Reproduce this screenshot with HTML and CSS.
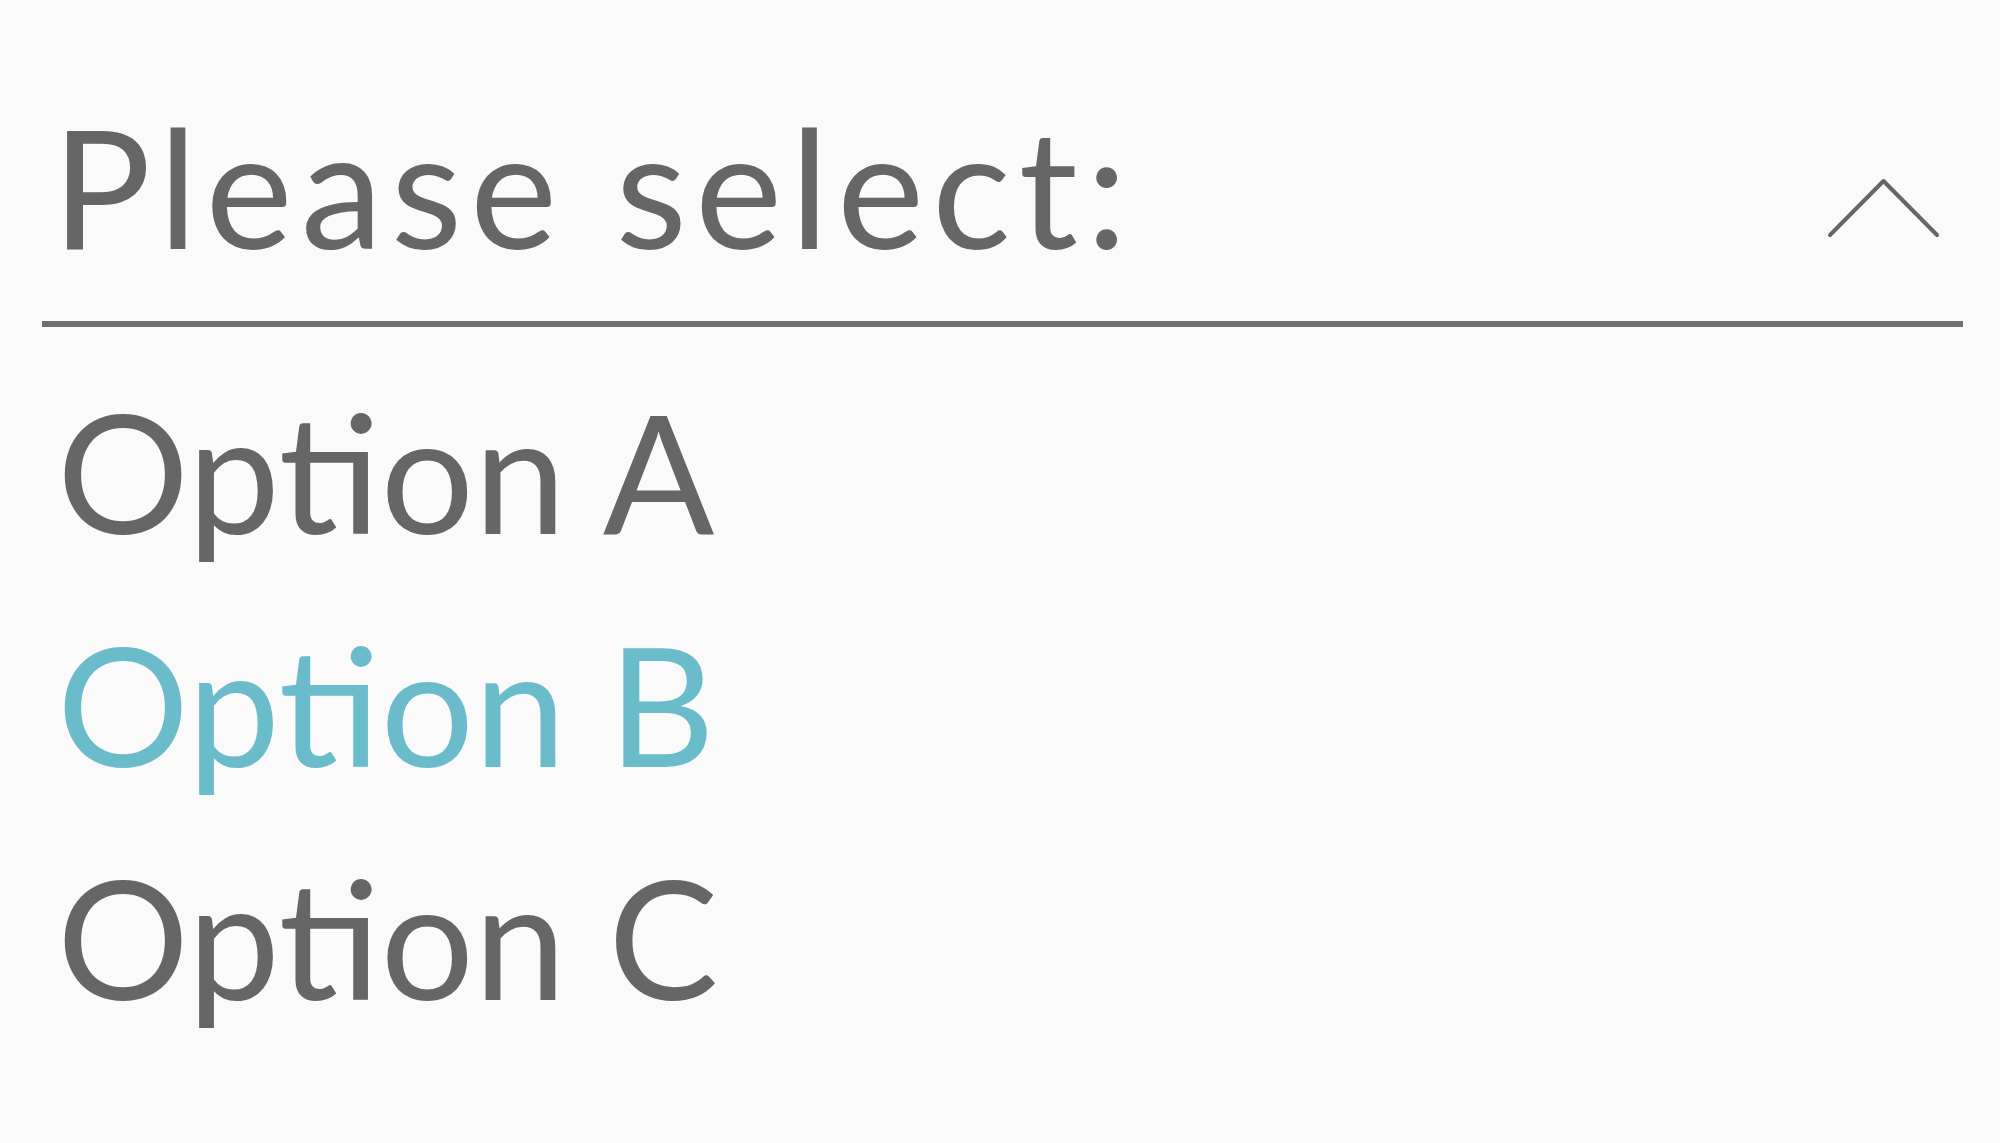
FILE: index.html
```html
<!DOCTYPE html>
<html lang="en">
<head>
    <meta charset="UTF-8">
    <meta name="viewport" content="width=device-width, initial-scale=1.0">
    <title>Select</title>
    <link rel="stylesheet" href="styles.css">
</head>
<body>

    <div class="select">
        <div class="select-header">
            <span class="select-label">Please select:</span>
            <svg class="select-arrow" width="115" height="62" viewBox="0 0 115 62">
                <polyline points="4,58 57.5,4 111,58" fill="none" stroke="#666" stroke-width="4" stroke-linecap="round" stroke-linejoin="round"/>
            </svg>
        </div>
        <ul class="select-options">
            <li class="option">Option A</li>
            <li class="option selected">Option B</li>
            <li class="option">Option C</li>
        </ul>
    </div>

</body>
</html>
```

FILE: styles.css
```css
* {
    margin: 0;
    padding: 0;
    box-sizing: border-box;
}

body {
    background-color: #fafafa;
    font-family: "Lato", "Open Sans", sans-serif;
    font-weight: 400;
    color: #666;
}

.select {
    margin: 0 37px 0 42px;
}

.select-header {
    display: flex;
    justify-content: space-between;
    align-items: center;
    padding: 85px 22px 36px 10px;
    border-bottom: 6px solid #707070;
}

.select-label {
    font-size: 165px;
    line-height: 200px;
    letter-spacing: 8px;
}

.select-arrow {
    margin-top: 46px;
}

.select-options {
    list-style: none;
    padding: 27px 0 0 15px;
}

.option {
    font-size: 165px;
    line-height: 233px;
}

.option.selected {
    color: #6bbccb;
}
```
